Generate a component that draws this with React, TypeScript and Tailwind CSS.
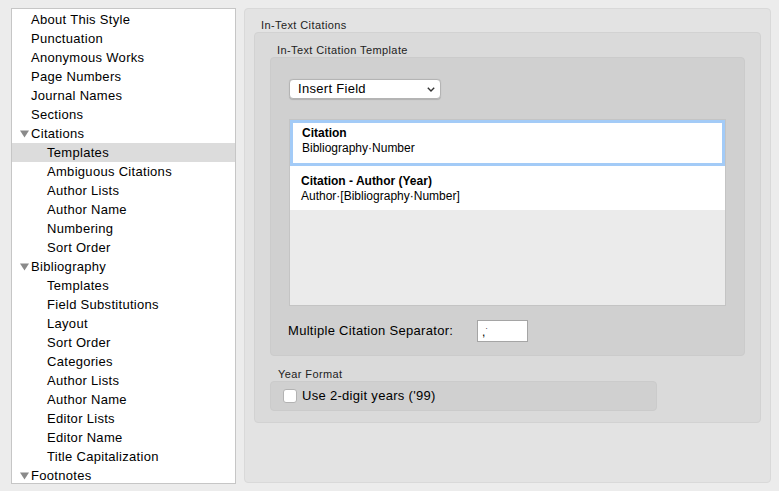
import React from 'react';

type NavItem = { label: string; level: 0 | 1; expanded?: boolean; selected?: boolean };

const navItems: NavItem[] = [
  { label: 'About This Style', level: 0 },
  { label: 'Punctuation', level: 0 },
  { label: 'Anonymous Works', level: 0 },
  { label: 'Page Numbers', level: 0 },
  { label: 'Journal Names', level: 0 },
  { label: 'Sections', level: 0 },
  { label: 'Citations', level: 0, expanded: true },
  { label: 'Templates', level: 1, selected: true },
  { label: 'Ambiguous Citations', level: 1 },
  { label: 'Author Lists', level: 1 },
  { label: 'Author Name', level: 1 },
  { label: 'Numbering', level: 1 },
  { label: 'Sort Order', level: 1 },
  { label: 'Bibliography', level: 0, expanded: true },
  { label: 'Templates', level: 1 },
  { label: 'Field Substitutions', level: 1 },
  { label: 'Layout', level: 1 },
  { label: 'Sort Order', level: 1 },
  { label: 'Categories', level: 1 },
  { label: 'Author Lists', level: 1 },
  { label: 'Author Name', level: 1 },
  { label: 'Editor Lists', level: 1 },
  { label: 'Editor Name', level: 1 },
  { label: 'Title Capitalization', level: 1 },
  { label: 'Footnotes', level: 0, expanded: true },
];

const Disclosure = () => (
  <svg width="9" height="8" viewBox="0 0 9 8" className="shrink-0">
    <polygon points="0,0.5 9,0.5 4.5,7.5" fill="#8a8a8a" />
  </svg>
);

const Chevron = () => (
  <svg width="8" height="5" viewBox="0 0 8 5">
    <polyline points="0.8,0.8 4,4 7.2,0.8" fill="none" stroke="#333" strokeWidth="1.4" />
  </svg>
);

export default function App() {
  return (
    <div
      className="w-[779px] h-[491px] bg-[#ececec] flex gap-[8px] pt-[8px] pl-[11px] text-black overflow-hidden"
      style={{ fontFamily: '"Liberation Sans", Arial, sans-serif' }}
    >
      {/* Sidebar outline */}
      <div className="w-[225px] h-[476px] bg-white border border-[#c6c6c6] pt-[1px] overflow-hidden">
        {navItems.map((item, i) => (
          <div
            key={i}
            className={`h-[19px] flex items-center text-[13px] leading-[19px] tracking-[0.3px] ${item.selected ? 'bg-[#dcdcdc]' : ''}`}
          >
            {item.level === 0 ? (
              <div className="flex items-center pl-[8px]">
                <div className="w-[11px] flex items-center">{item.expanded && <Disclosure />}</div>
                <span>{item.label}</span>
              </div>
            ) : (
              <span className="pl-[35px]">{item.label}</span>
            )}
          </div>
        ))}
      </div>

      {/* Main pane */}
      <div className="w-[527px] h-[475px] bg-[#e3e3e3] border border-[#d9d9d9] rounded-[4px] pt-[9px] px-[9px]">
        <div className="text-[11px] leading-[14px] pl-[7px] tracking-[0.4px] text-[#222]">In-Text Citations</div>

        <div className="h-[391px] bg-[#dadada] border border-[#d2d2d2] rounded-[4px] pt-[10px] px-[15px]">
          <div className="text-[11px] leading-[14px] pl-[7px] tracking-[0.4px] text-[#222]">In-Text Citation Template</div>

          <div className="h-[299px] bg-[#d0d0d0] border border-[#cbcbcb] rounded-[4px] pt-[21px] pl-[18px] pr-[16px]">
            <div className="w-[152px] h-[20px] bg-white border border-[#b4b4b4] rounded-[4px] shadow-[0_0.5px_1px_rgba(0,0,0,0.15)] flex items-center justify-between pl-[8px] pr-[5px] text-[13px] tracking-[0.3px]">
              <span>Insert Field</span>
              <Chevron />
            </div>

            <div className="mt-[20px] w-[437px] h-[187px] bg-[#ebebeb] border border-[#c4c4c4] flex flex-col">
              <div className="h-[46px] bg-white border-[3px] border-[#a3cbf7] pl-[9px] pt-[3px] text-[12px] leading-[15px]">
                <div className="font-bold">Citation</div>
                <div>Bibliography·Number</div>
              </div>
              <div className="h-[44px] bg-white pl-[11px] pt-[8px] text-[12px] leading-[15px]">
                <div className="font-bold">Citation - Author (Year)</div>
                <div>Author·[Bibliography·Number]</div>
              </div>
            </div>

            <div className="mt-[14px] flex items-center h-[22px] -ml-[1px]">
              <span className="text-[13px] w-[189px] tracking-[0.3px]">Multiple Citation Separator:</span>
              <div className="w-[51px] h-[22px] bg-white border border-[#a5a5a5] pl-[4px] pt-[5px] text-[12px] leading-[12px] flex items-start">
                <span>,</span>
                <span className="text-[8px] leading-[8px] -mt-[1px]">·</span>
              </div>
            </div>
          </div>

          <div className="mt-[11px] text-[11px] leading-[14px] pl-[8px] tracking-[0.4px] text-[#222]">Year Format</div>
          <div className="w-[387px] h-[30px] bg-[#d0d0d0] border border-[#cbcbcb] rounded-[4px] flex items-center pl-[12px] gap-[5px]">
            <div className="w-[14px] h-[14px] bg-white border border-[#b3b3b3] rounded-[3px]" />
            <span className="text-[13px] tracking-[0.3px]">Use 2-digit years ('99)</span>
          </div>
        </div>
      </div>
    </div>
  );
}
